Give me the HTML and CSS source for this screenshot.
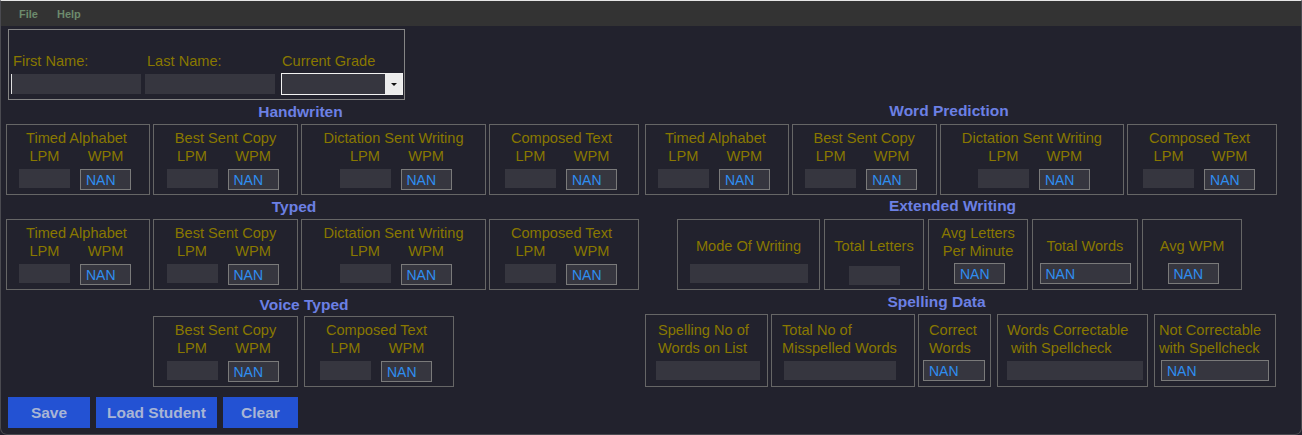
FILE: index.html
```html
<!DOCTYPE html>
<html>
<head>
<meta charset="utf-8">
<title>Student Data</title>
<link rel="stylesheet" href="styles.css">
</head>
<body>
<div class="window">
  <div class="menubar">
    <span class="menu-item">File</span>
    <span class="menu-item">Help</span>
  </div>
  <div class="content">
    <div class="namebox">
      <div class="field field--first">
        <span class="field-label">First Name:</span>
        <div class="text-input text-input--focused"></div>
      </div>
      <div class="field field--last">
        <span class="field-label">Last Name:</span>
        <div class="text-input"></div>
      </div>
      <div class="field field--grade">
        <span class="field-label">Current Grade</span>
        <div class="combo"><span class="combo-button"><span class="combo-arrow"></span></span></div>
      </div>
    </div>

    <div class="row">
      <section class="section">
        <h2 class="heading heading--handwriten">Handwriten</h2>
        <div class="boxes">
          <div class="metric metric--alpha">
            <div class="metric-title">Timed Alphabet</div>
            <div class="metric-grid"><span class="col-label">LPM</span><span class="col-label">WPM</span><div class="gray-input"></div><div class="nan">NAN</div></div>
          </div>
          <div class="metric metric--copy">
            <div class="metric-title">Best Sent Copy</div>
            <div class="metric-grid"><span class="col-label">LPM</span><span class="col-label">WPM</span><div class="gray-input"></div><div class="nan">NAN</div></div>
          </div>
          <div class="metric metric--dict">
            <div class="metric-title">Dictation Sent Writing</div>
            <div class="metric-grid"><span class="col-label">LPM</span><span class="col-label">WPM</span><div class="gray-input"></div><div class="nan">NAN</div></div>
          </div>
          <div class="metric metric--composed">
            <div class="metric-title">Composed Text</div>
            <div class="metric-grid"><span class="col-label">LPM</span><span class="col-label">WPM</span><div class="gray-input"></div><div class="nan">NAN</div></div>
          </div>
        </div>
      </section>
      <section class="section">
        <h2 class="heading heading--wordpred">Word Prediction</h2>
        <div class="boxes">
          <div class="metric metric--alpha">
            <div class="metric-title">Timed Alphabet</div>
            <div class="metric-grid"><span class="col-label">LPM</span><span class="col-label">WPM</span><div class="gray-input"></div><div class="nan">NAN</div></div>
          </div>
          <div class="metric metric--copy">
            <div class="metric-title">Best Sent Copy</div>
            <div class="metric-grid"><span class="col-label">LPM</span><span class="col-label">WPM</span><div class="gray-input"></div><div class="nan">NAN</div></div>
          </div>
          <div class="metric metric--dict">
            <div class="metric-title">Dictation Sent Writing</div>
            <div class="metric-grid"><span class="col-label">LPM</span><span class="col-label">WPM</span><div class="gray-input"></div><div class="nan">NAN</div></div>
          </div>
          <div class="metric metric--composed">
            <div class="metric-title">Composed Text</div>
            <div class="metric-grid"><span class="col-label">LPM</span><span class="col-label">WPM</span><div class="gray-input"></div><div class="nan">NAN</div></div>
          </div>
        </div>
      </section>
    </div>

    <div class="row">
      <section class="section">
        <h2 class="heading heading--typed">Typed</h2>
        <div class="boxes">
          <div class="metric metric--alpha">
            <div class="metric-title">Timed Alphabet</div>
            <div class="metric-grid"><span class="col-label">LPM</span><span class="col-label">WPM</span><div class="gray-input"></div><div class="nan">NAN</div></div>
          </div>
          <div class="metric metric--copy">
            <div class="metric-title">Best Sent Copy</div>
            <div class="metric-grid"><span class="col-label">LPM</span><span class="col-label">WPM</span><div class="gray-input"></div><div class="nan">NAN</div></div>
          </div>
          <div class="metric metric--dict">
            <div class="metric-title">Dictation Sent Writing</div>
            <div class="metric-grid"><span class="col-label">LPM</span><span class="col-label">WPM</span><div class="gray-input"></div><div class="nan">NAN</div></div>
          </div>
          <div class="metric metric--composed">
            <div class="metric-title">Composed Text</div>
            <div class="metric-grid"><span class="col-label">LPM</span><span class="col-label">WPM</span><div class="gray-input"></div><div class="nan">NAN</div></div>
          </div>
        </div>
      </section>
      <section class="section">
        <h2 class="heading heading--extended">Extended Writing</h2>
        <div class="boxes boxes--extended">
          <div class="ext ext--mode">
            <div class="ext-label">Mode Of Writing</div>
            <div class="gray-input ext-input--mode"></div>
          </div>
          <div class="ext ext--letters">
            <div class="ext-label">Total Letters</div>
            <div class="gray-input ext-input--letters"></div>
          </div>
          <div class="ext ext--avg-letters">
            <div class="ext-label ext-label--two">Avg Letters<br>Per Minute</div>
            <div class="nan ext-nan--avg-letters">NAN</div>
          </div>
          <div class="ext ext--words">
            <div class="ext-label">Total Words</div>
            <div class="nan ext-nan--words">NAN</div>
          </div>
          <div class="ext ext--avg-wpm">
            <div class="ext-label">Avg WPM</div>
            <div class="nan ext-nan--avg-wpm">NAN</div>
          </div>
        </div>
      </section>
    </div>

    <div class="row">
      <section class="section">
        <h2 class="heading heading--voice">Voice Typed</h2>
        <div class="boxes boxes--voice">
          <div class="metric metric--copy">
            <div class="metric-title">Best Sent Copy</div>
            <div class="metric-grid"><span class="col-label">LPM</span><span class="col-label">WPM</span><div class="gray-input"></div><div class="nan">NAN</div></div>
          </div>
          <div class="metric metric--composed">
            <div class="metric-title">Composed Text</div>
            <div class="metric-grid"><span class="col-label">LPM</span><span class="col-label">WPM</span><div class="gray-input"></div><div class="nan">NAN</div></div>
          </div>
        </div>
      </section>
      <section class="section">
        <h2 class="heading heading--spelling">Spelling Data</h2>
        <div class="boxes">
          <div class="spell spell--list">
            <div class="spell-label">Spelling No of<br>Words on List</div>
            <div class="gray-input spell-input"></div>
          </div>
          <div class="spell spell--missp">
            <div class="spell-label">Total No of<br>Misspelled Words</div>
            <div class="gray-input spell-input"></div>
          </div>
          <div class="spell spell--correct">
            <div class="spell-label">Correct<br>Words</div>
            <div class="nan spell-nan">NAN</div>
          </div>
          <div class="spell spell--fixable">
            <div class="spell-label">Words Correctable<br>&nbsp;with Spellcheck</div>
            <div class="gray-input spell-input"></div>
          </div>
          <div class="spell spell--unfixable">
            <div class="spell-label">Not Correctable<br>with Spellcheck</div>
            <div class="nan spell-nan">NAN</div>
          </div>
        </div>
      </section>
    </div>

    <div class="buttons">
      <button class="btn btn--save">Save</button>
      <button class="btn btn--load">Load Student</button>
      <button class="btn btn--clear">Clear</button>
    </div>
  </div>
</div>
</body>
</html>
```

FILE: styles.css
```css
* {
  box-sizing: border-box;
  margin: 0;
  padding: 0;
}

html, body {
  background: #22222d;
}

body {
  width: 1302px;
  height: 435px;
  overflow: hidden;
  font-family: "Liberation Sans", Arial, sans-serif;
}

.window {
  width: 1302px;
  height: 435px;
  border: 1px solid #4a4a50;
  border-top-color: #e6e6e6;
  border-radius: 0 0 7px 7px;
  background: #22222d;
  overflow: hidden;
}

/* menu */
.menubar {
  height: 25px;
  background: #333333;
  display: flex;
  gap: 19px;
  padding-left: 18px;
  font-weight: bold;
  font-size: 11px;
  line-height: 26px;
  color: #6c8a6c;
}

.content {
  padding-top: 3px;
}

/* name box */
.namebox {
  margin-left: 7px;
  width: 397px;
  height: 71px;
  border: 1px solid #858585;
  display: flex;
  padding: 22px 0 0 2px;
}

.field {
  display: flex;
  flex-direction: column;
}

.field--first { width: 130px; margin-right: 4px; }
.field--last { width: 130px; margin-right: 6px; }
.field--grade { width: 122px; }

.field-label {
  display: block;
  font-size: 14.6px;
  line-height: 18px;
  color: #897800;
  padding-left: 2px;
  margin-bottom: 4px;
  white-space: nowrap;
}

.field--grade .field-label {
  padding-left: 1px;
  margin-bottom: 3px;
}

.text-input {
  height: 20px;
  background: #36363f;
}

.text-input--focused {
  border-left: 1px solid #e0e0e0;
}

.combo {
  height: 22px;
  border: 1px solid #f2f2f2;
  background: #36363f;
  display: flex;
  justify-content: flex-end;
}

.combo-button {
  width: 17px;
  background: #ececec;
  display: flex;
  align-items: center;
  justify-content: center;
}

.combo-arrow {
  width: 0;
  height: 0;
  border-left: 3px solid transparent;
  border-right: 3px solid transparent;
  border-top: 3px solid #111;
}

/* section rows */
.row {
  display: grid;
  grid-template-columns: 633px 632px;
  column-gap: 6px;
  padding-left: 5px;
}

.section {
  display: flex;
  flex-direction: column;
}

.heading {
  height: 24px;
  font-size: 15.5px;
  line-height: 24px;
  font-weight: bold;
  color: #6c80e4;
  text-align: center;
  white-space: nowrap;
}

.heading--handwriten { width: 589px; }
.heading--typed { width: 576px; }
.heading--voice { width: 596px; height: 26px; padding-top: 3px; line-height: 23px; }
.heading--wordpred { width: 608px; line-height: 22px; }
.heading--extended { width: 615px; line-height: 22px; }
.heading--spelling { width: 583px; }

.boxes {
  display: flex;
  gap: 3px;
}

.boxes--extended {
  margin-left: 32px;
  gap: 4px;
}

.boxes--voice {
  margin-left: 147px;
  gap: 6px;
}

/* metric boxes */
.metric {
  height: 71px;
  border: 1px solid #666;
  display: flex;
  flex-direction: column;
  align-items: center;
  padding-top: 4px;
}

.metric--alpha { width: 144px; }
.metric--copy { width: 145px; }
.metric--dict { width: 185px; }
.metric--composed { width: 150px; }

.metric-title,
.col-label,
.ext-label,
.spell-label {
  font-size: 14.6px;
  line-height: 18px;
  color: #897800;
  white-space: nowrap;
}

.metric-title {
  text-align: center;
}

.metric--composed .metric-title {
  margin-right: 5px;
}

.metric--alpha .metric-title {
  margin-right: 3px;
}

.metric-grid {
  display: grid;
  grid-template-columns: 51px 51px;
  column-gap: 10px;
  align-items: start;
  margin-right: 6px;
}

.metric--dict .metric-grid {
  margin-right: 0;
  margin-left: 4px;
}

.col-label {
  text-align: center;
}

.metric-grid .gray-input,
.metric-grid .nan {
  margin-top: 4px;
}

.gray-input {
  height: 19px;
  background: #36363f;
}

.nan {
  height: 21px;
  border: 1px solid #7a7a7a;
  background: #36363f;
  color: #2f8ef0;
  font-size: 14px;
  line-height: 20px;
  padding-left: 5px;
  white-space: nowrap;
}

/* extended writing */
.ext {
  height: 71px;
  border: 1px solid #666;
  display: flex;
  flex-direction: column;
  align-items: center;
}

.ext-label {
  margin-top: 17px;
  text-align: center;
}

.ext-label--two {
  margin-top: 4px;
}

.ext--mode { width: 143px; }
.ext--letters { width: 100px; }
.ext--avg-letters { width: 100px; }
.ext--words { width: 106px; }
.ext--avg-wpm { width: 100px; }

.ext-input--mode { width: 118px; margin-top: 9px; }
.ext-input--letters { width: 51px; margin-top: 11px; }
.ext-nan--avg-letters { width: 51px; margin-top: 3px; margin-left: 3px; }
.ext-nan--words { width: 91px; margin-top: 8px; }
.ext-nan--avg-wpm { width: 51px; margin-top: 8px; margin-left: 2px; }

/* spelling data */
.spell {
  height: 73px;
  border: 1px solid #666;
  display: flex;
  flex-direction: column;
  align-items: flex-start;
  padding-top: 6px;
}

.spell-input { margin-top: 4px; }
.spell-nan { margin-top: 3px; }

.spell--list { width: 123px; }
.spell--list .spell-label { padding-left: 12px; }
.spell--list .spell-input { margin-left: 10px; width: 104px; }

.spell--missp { width: 144px; }
.spell--missp .spell-label { padding-left: 10px; }
.spell--missp .spell-input { margin-left: 12px; width: 112px; }

.spell--correct { width: 73px; }
.spell--correct .spell-label { padding-left: 10px; }
.spell--correct .spell-nan { margin-left: 4px; width: 62px; }

.spell--fixable { width: 151px; margin-left: 3px; }
.spell--fixable .spell-label { padding-left: 9px; }
.spell--fixable .spell-input { margin-left: 9px; width: 136px; }

.spell--unfixable { width: 122px; margin-left: 3px; }
.spell--unfixable .spell-label { padding-left: 4px; }
.spell--unfixable .spell-nan { margin-left: 6px; width: 108px; }

/* buttons */
.buttons {
  display: flex;
  gap: 6px;
  margin: 10px 0 0 7px;
}

.btn {
  height: 31px;
  border: none;
  background: #2352d3;
  color: #a8b5d5;
  font-family: "Liberation Sans", Arial, sans-serif;
  font-size: 15.5px;
  font-weight: bold;
  text-align: center;
}

.btn--save { width: 82px; }
.btn--load { width: 121px; }
.btn--clear { width: 75px; }
```
